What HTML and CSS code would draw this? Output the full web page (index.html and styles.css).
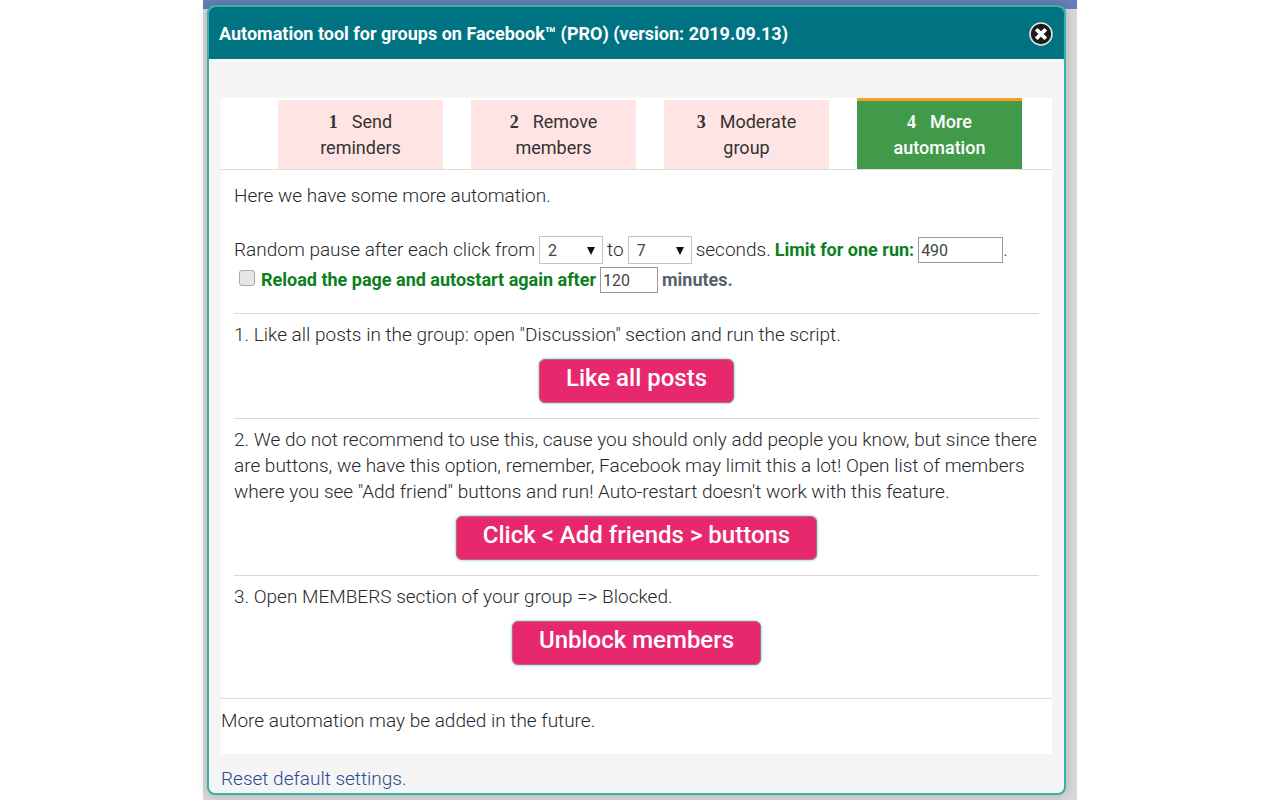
FILE: index.html
```html
<!DOCTYPE html>
<html lang="en">
<head>
<meta charset="utf-8">
<title>Automation tool for groups</title>
<link rel="stylesheet" href="styles.css">
</head>
<body>
<div class="page">
  <main class="dialog">
    <header class="dialog-header">
      <h1 class="title">Automation tool for groups on Facebook™ (PRO) (version: 2019.09.13)</h1>
      <button class="close" type="button" aria-label="Close">
        <svg viewBox="0 0 24 24" width="24" height="24" aria-hidden="true">
          <circle cx="12" cy="12" r="11" fill="#1c1c1c" stroke="#e4e4e4" stroke-width="1.6"/>
          <path d="M8.6 8.6l6.8 6.8M15.4 8.6l-6.8 6.8" stroke="#fff" stroke-width="3.8" stroke-linecap="square"/>
        </svg>
      </button>
    </header>
    <div class="dialog-body">
      <div class="panel">
        <nav class="tabs">
          <button class="tab" type="button"><b class="num">1</b>Send<br>reminders</button>
          <button class="tab" type="button"><b class="num">2</b>Remove<br>members</button>
          <button class="tab" type="button"><b class="num">3</b>Moderate<br>group</button>
          <button class="tab tab-active" type="button"><b class="num">4</b>More<br>automation</button>
        </nav>
        <div class="content">
          <p class="intro">Here we have some more automation.</p>
          <div class="settings">
            <div class="row">
              <label for="from">Random pause after each click from</label>
              <span class="select-wrap"><select id="from" class="select"><option>2</option></select></span>
              <label for="to">to</label>
              <span class="select-wrap"><select id="to" class="select"><option>7</option></select></span>
              <span>seconds.</span>
              <label class="green" for="limit">Limit for one run:</label>
              <span class="field-end"><input id="limit" class="input input-wide" type="text" value="490">.</span>
            </div>
            <div class="row">
              <input id="reload" class="check" type="checkbox">
              <label class="green" for="reload">Reload the page and autostart again after</label>
              <input id="minutes" class="input" type="text" value="120" aria-label="Minutes">
              <label class="strong" for="minutes">minutes.</label>
            </div>
          </div>
          <section class="step">
            <p class="text">1. Like all posts in the group: open "Discussion" section and run the script.</p>
            <button class="action" type="button">Like all posts</button>
          </section>
          <section class="step">
            <p class="text">2. We do not recommend to use this, cause you should only add people you know, but since there are buttons, we have this option, remember, Facebook may limit this a lot! Open list of members where you see "Add friend" buttons and run! Auto-restart doesn't work with this feature.</p>
            <button class="action" type="button">Click &lt; Add friends &gt; buttons</button>
          </section>
          <section class="step">
            <p class="text">3. Open MEMBERS section of your group =&gt; Blocked.</p>
            <button class="action" type="button">Unblock members</button>
          </section>
        </div>
        <p class="future">More automation may be added in the future.</p>
      </div>
      <a class="reset" href="#">Reset default settings.</a>
    </div>
  </main>
</div>
</body>
</html>
```
FILE: styles.css
```css
* { box-sizing: border-box; }
body {
  margin: 0;
  background: #fff;
  color: #26292c;
  font: 300 19px/26px Roboto, "Liberation Sans", sans-serif;
}
p, h1 { margin: 0; }
button, input, select { font-family: inherit; }
.page {
  max-width: 874px;
  min-height: 100vh;
  margin: 0 auto;
  padding: 5px 11px 5px 4px;
  background: linear-gradient(#6580b8 0 9px, #d9d9dc 9px);
}
.dialog {
  border: 2px solid #35b3a7;
  border-radius: 8px;
  background: #f5f5f5;
  box-shadow: 0 0 12px rgba(0, 0, 0, .2);
  overflow: hidden;
}
.dialog-header {
  display: flex;
  align-items: center;
  justify-content: space-between;
  height: 52px;
  padding: 2px 11px 0 10px;
  background: #007383;
}
.title { color: #fff; font-size: 18px; line-height: 26px; font-weight: 700; }
.close { display: flex; padding: 0; border: 0; background: none; }
.dialog-body { padding: 39px 12px 0; }
.panel { background: #fff; }
.tabs {
  display: grid;
  grid-template-columns: repeat(4, 1fr);
  gap: 28px;
  padding: 0 30px 0 57px;
  border-bottom: 1px solid #ddd;
}
.tab {
  height: 71px;
  padding: 0;
  border: 0;
  border-top: 2px solid #fff;
  background: #ffe4e4;
  color: #333;
  font-size: 18px;
  line-height: 26px;
  font-weight: 400;
}
.tab-active { border-top: 3px solid #f9a01b; background: #419a4a; color: #fff; font-weight: 500; }
.num { margin-right: 14px; font-family: "Liberation Serif", serif; font-weight: 700; }
.content { padding: 13px 13px 18px; }
.settings { padding: 26px 0 18px; }
.row { display: flex; align-items: center; gap: 4px; height: 30px; white-space: nowrap; }
.select-wrap { position: relative; display: flex; }
.select-wrap::after {
  content: "";
  position: absolute;
  top: 11px;
  right: 8px;
  border: 4px solid transparent;
  border-top: 8px solid #111;
  border-bottom: 0;
}
.select {
  appearance: none;
  width: 64px;
  height: 28px;
  padding: 0 8px;
  border: 1px solid #c4c4c8;
  background: #fff;
  color: #444;
  font-size: 16px;
}
.input {
  width: 58px;
  height: 26px;
  padding: 0 2px;
  border: 1px solid #999;
  background: #fff;
  color: #444;
  font-size: 16px;
}
.input-wide { width: 85px; }
.field-end { display: flex; align-items: center; }
.check {
  appearance: none;
  width: 16px;
  height: 16px;
  margin: 0 2px 5px 5px;
  border: 1px solid #aaa;
  border-radius: 3px;
  background: #e6e6e6;
}
.green, .strong { font-size: 18px; font-weight: 700; }
.green { color: #0a8020; }
.strong { color: #56606b; }
.step {
  display: flex;
  flex-direction: column;
  align-items: center;
  gap: 11px;
  padding: 8px 0 15px;
  border-top: 1px solid #d8d8dc;
}
.text { width: 100%; }
.action {
  height: 44px;
  padding: 0 26px 7px;
  border: 1px solid #b06a87;
  border-radius: 6px;
  background: #e8286c;
  box-shadow: 0 0 3px #6abfb0;
  color: #fff;
  font-size: 24px;
  line-height: 30px;
  font-weight: 500;
}
.future { padding: 9px 0 20px; border-top: 1px solid #ddd; }
.reset { display: block; padding: 12px 0 1px; color: #2a4b91; text-decoration: none; }
```
